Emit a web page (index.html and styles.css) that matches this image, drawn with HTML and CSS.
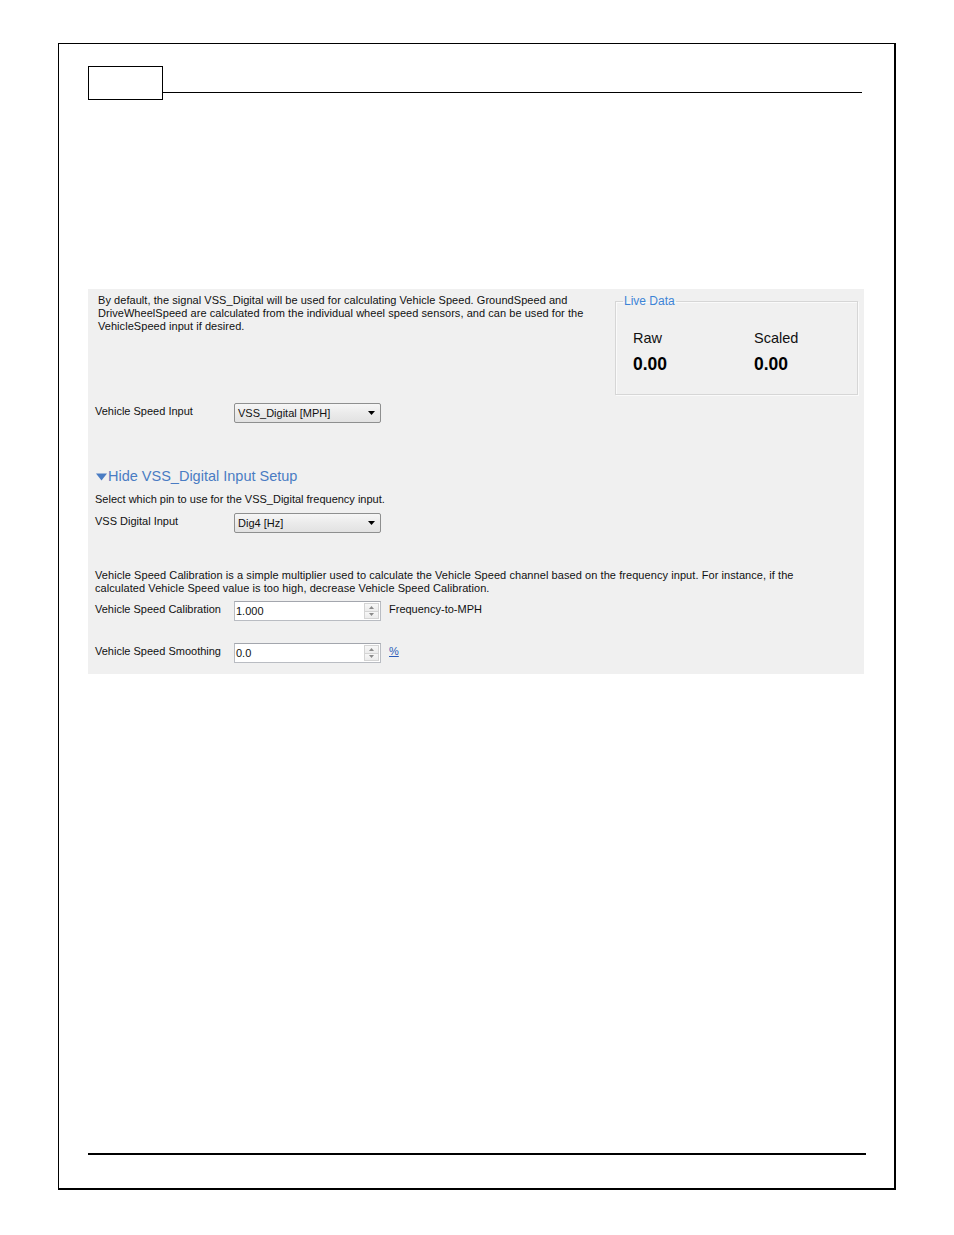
FILE: index.html
```html
<!DOCTYPE html>
<html lang="en">
<head>
<meta charset="utf-8">
<title>Vehicle Speed</title>
<link rel="stylesheet" href="styles.css">
</head>
<body>
<div class="page">
  <header class="page-head">
    <div class="page-num"></div>
    <div class="head-rule"></div>
  </header>

  <section class="panel">
    <div class="top">
      <p class="intro">By default, the signal VSS_Digital will be used for calculating Vehicle Speed. GroundSpeed and<br>DriveWheelSpeed are calculated from the individual wheel speed sensors, and can be used for the<br>VehicleSpeed input if desired.</p>
      <fieldset class="live">
        <legend>Live Data</legend>
        <div class="live-grid">
          <div class="live-col">
            <div class="live-label">Raw</div>
            <div class="live-val">0.00</div>
          </div>
          <div class="live-col">
            <div class="live-label">Scaled</div>
            <div class="live-val">0.00</div>
          </div>
        </div>
      </fieldset>
    </div>

    <div class="row row-first">
      <span class="lbl">Vehicle Speed Input</span>
      <div class="combo"><span>VSS_Digital [MPH]</span><svg class="combo-arrow" width="7" height="4" viewBox="0 0 7 4"><path d="M0 0H7L3.5 4Z" fill="#000"/></svg></div>
    </div>

    <div class="toggle"><svg class="tri" width="11" height="8" viewBox="0 0 11 8"><path d="M0 0.5H11L5.5 7.5Z" fill="#4a7cc3"/></svg>Hide VSS_Digital Input Setup</div>
    <p class="hint">Select which pin to use for the VSS_Digital frequency input.</p>

    <div class="row row-dig">
      <span class="lbl">VSS Digital Input</span>
      <div class="combo"><span>Dig4 [Hz]</span><svg class="combo-arrow" width="7" height="4" viewBox="0 0 7 4"><path d="M0 0H7L3.5 4Z" fill="#000"/></svg></div>
    </div>

    <p class="para">Vehicle Speed Calibration is a simple multiplier used to calculate the Vehicle Speed channel based on the frequency input. For instance, if the<br>calculated Vehicle Speed value is too high, decrease Vehicle Speed Calibration.</p>

    <div class="row row-cal">
      <span class="lbl">Vehicle Speed Calibration</span>
      <div class="spin">
        <span class="spin-val">1.000</span>
        <div class="spin-btns">
          <div class="spin-btn"><svg width="5" height="3" viewBox="0 0 5 3"><path d="M0 3H5L2.5 0Z" fill="#8a8a8a"/></svg></div>
          <div class="spin-btn"><svg width="5" height="3" viewBox="0 0 5 3"><path d="M0 0H5L2.5 3Z" fill="#8a8a8a"/></svg></div>
        </div>
      </div>
      <span class="unit">Frequency-to-MPH</span>
    </div>

    <div class="row row-smooth">
      <span class="lbl">Vehicle Speed Smoothing</span>
      <div class="spin">
        <span class="spin-val">0.0</span>
        <div class="spin-btns">
          <div class="spin-btn"><svg width="5" height="3" viewBox="0 0 5 3"><path d="M0 3H5L2.5 0Z" fill="#8a8a8a"/></svg></div>
          <div class="spin-btn"><svg width="5" height="3" viewBox="0 0 5 3"><path d="M0 0H5L2.5 3Z" fill="#8a8a8a"/></svg></div>
        </div>
      </div>
      <a class="unit unit-link" href="#">%</a>
    </div>
  </section>

  <div class="foot-rule"></div>
</div>
</body>
</html>
```

FILE: styles.css
```css
html, body {
  margin: 0;
  padding: 0;
  background: #fff;
}

.page {
  margin: 43px 0 0 58px;
  width: 838px;
  height: 1147px;
  box-sizing: border-box;
  border-top: 1px solid #000;
  border-left: 1px solid #000;
  border-right: 2px solid #000;
  border-bottom: 2px solid #000;
  padding-top: 22px;
}

.page-head {
  display: flex;
  align-items: flex-start;
  margin-left: 29px;
}

.page-num {
  width: 75px;
  height: 34px;
  box-sizing: border-box;
  border: 1px solid #000;
}

.head-rule {
  width: 699px;
  margin-top: 26px;
  border-top: 1px solid #000;
}

.panel {
  margin: 189px 0 0 29px;
  width: 776px;
  box-sizing: border-box;
  background: #f0f0f0;
  padding: 5px 0 11px 7px;
  font-family: "Liberation Sans", Arial, sans-serif;
  font-size: 11px;
  line-height: 13px;
  color: #111;
}

.panel p {
  margin: 0;
}

.top {
  display: flex;
  justify-content: space-between;
  align-items: flex-start;
}

.intro {
  margin-left: 3px !important;
  letter-spacing: 0.05px;
}

.live {
  margin: 1px 6px 0 0;
  width: 243px;
  height: 100px;
  box-sizing: border-box;
  border: 1px solid #d6d6d6;
  box-shadow: inset 1px 1px 0 #fafafa, 1px 1px 0 #fafafa;
  padding: 0;
  min-width: 0;
}

.live legend {
  margin-left: 7px;
  padding: 0 1px;
  color: #3d84d6;
  font-size: 12px;
  line-height: 13px;
}

.live-grid {
  display: flex;
  padding: 22px 0 0 17px;
}

.live-col {
  width: 121px;
  flex-shrink: 0;
}

.live-label {
  font-size: 14.5px;
  line-height: 17px;
  color: #111;
}

.live-val {
  margin-top: 7px;
  font-weight: bold;
  font-size: 17.5px;
  line-height: 20px;
  color: #000;
}

.row {
  display: flex;
  align-items: flex-start;
}

.lbl {
  width: 139px;
  flex-shrink: 0;
  padding-top: 2px;
}

.row-first { margin-top: 8px; }
.row-dig { margin-top: 7px; }
.row-cal { margin-top: 6px; }
.row-smooth { margin-top: 22px; }

.combo {
  width: 147px;
  height: 20px;
  box-sizing: border-box;
  border: 1px solid #8e8f8f;
  border-radius: 2px;
  background: linear-gradient(#f6f6f6, #ebebeb 50%, #e2e2e2);
  display: flex;
  align-items: center;
  justify-content: space-between;
  padding: 0 5px 0 3px;
}

.combo-arrow {
  display: block;
}

.toggle {
  display: flex;
  align-items: center;
  margin: 45px 0 0 1px;
  font-size: 14.5px;
  line-height: 17px;
  color: #4a7cc3;
}

.tri {
  display: block;
  margin-right: 1px;
}

.hint {
  margin-top: 8px !important;
}

.para {
  margin-top: 36px !important;
  letter-spacing: 0.07px;
}

.spin {
  width: 147px;
  height: 20px;
  box-sizing: border-box;
  border: 1px solid #b9bcc2;
  border-top-color: #a3a6ad;
  background: #fff;
  display: flex;
  align-items: center;
  justify-content: space-between;
  padding: 0 1px 0 1px;
}

.spin-btns {
  width: 15px;
  height: 16px;
  box-sizing: border-box;
  border: 1px solid #d4d4d4;
  display: flex;
  flex-direction: column;
}

.spin-btn {
  flex: 1;
  display: flex;
  align-items: center;
  justify-content: center;
  background: linear-gradient(#f7f7f7, #ececec);
}

.spin-btn + .spin-btn {
  border-top: 1px solid #d4d4d4;
}

.spin-btn svg {
  display: block;
}

.unit {
  margin-left: 8px;
  padding-top: 2px;
}

.unit-link {
  color: #2c5cb8;
  text-decoration: underline;
}

.foot-rule {
  margin: 479px 0 0 29px;
  width: 778px;
  border-top: 2px solid #000;
}
```
